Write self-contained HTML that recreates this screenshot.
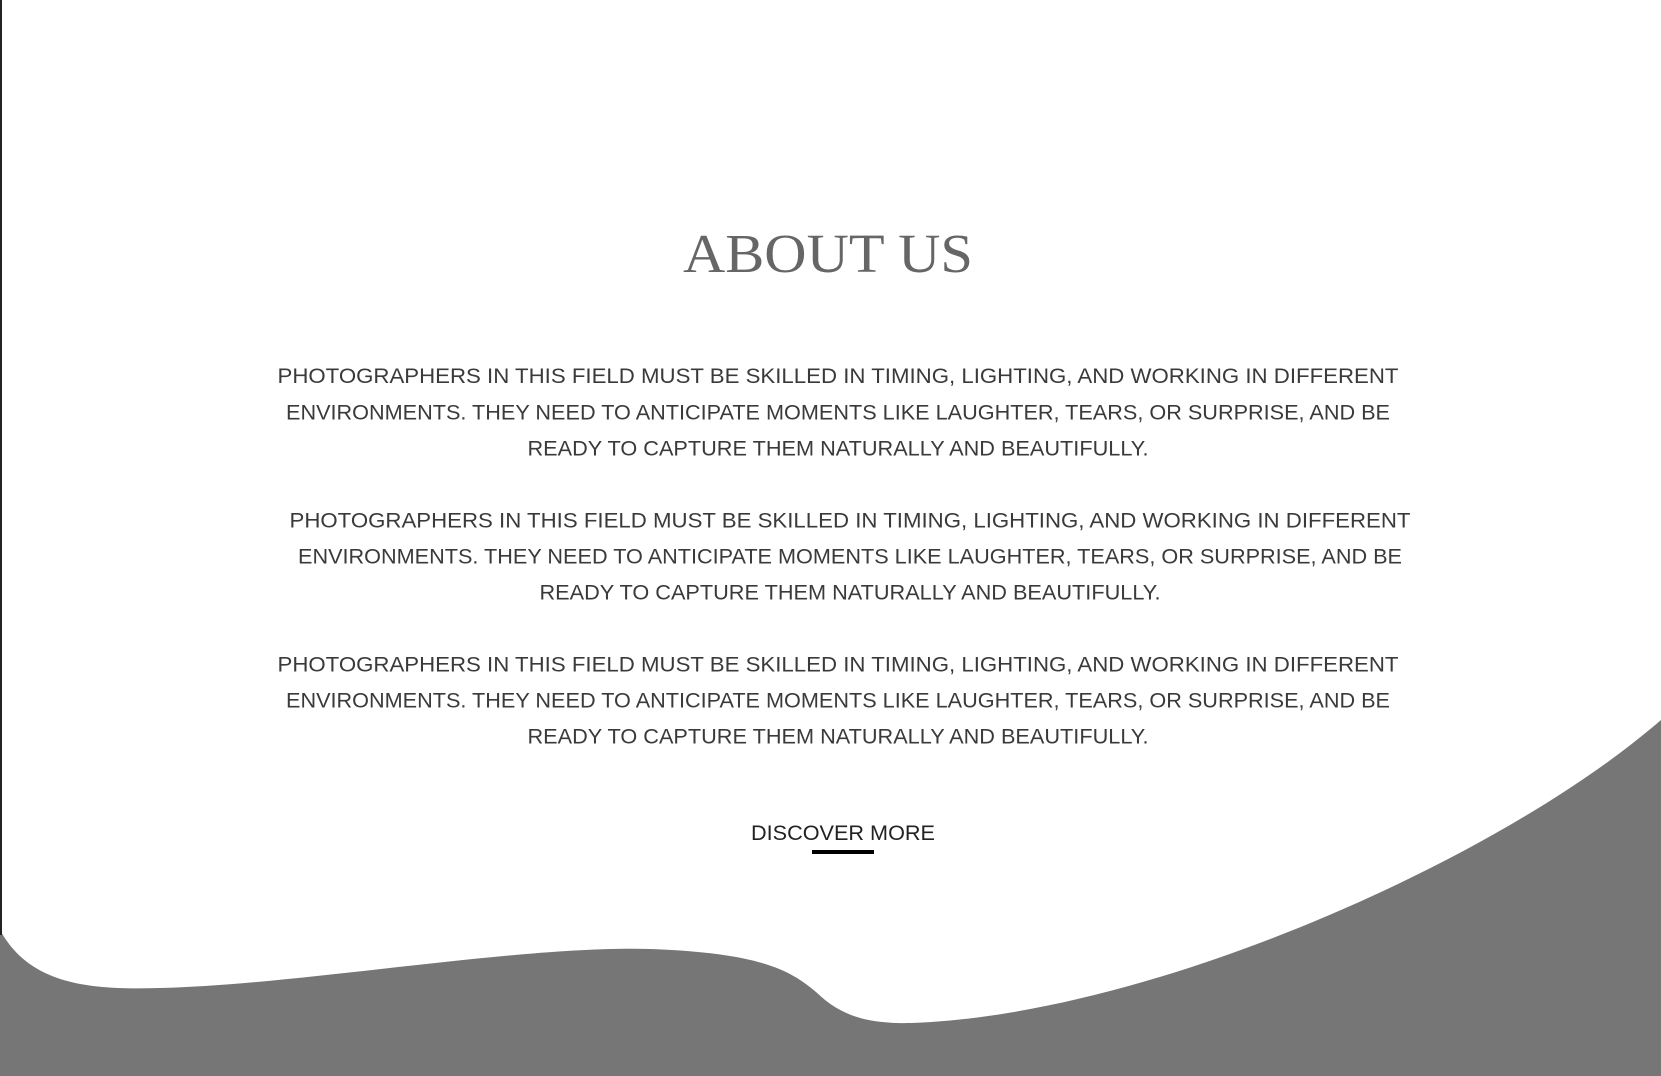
<!DOCTYPE html>
<html><head><meta charset="utf-8"><style>
html,body{margin:0;padding:0;background:#fff;width:1661px;height:1076px;overflow:hidden}
svg{display:block}
.b{font-family:"Liberation Sans",sans-serif;font-size:21px;fill:#3a3a3a}
</style></head><body>
<svg width="1661" height="1076" viewBox="0 0 1661 1076" xmlns="http://www.w3.org/2000/svg">
<rect x="0" y="0" width="1661" height="1076" fill="#fff"/>
<path d="M0,930 C30,985 90,990 159,988 C300,985 520,945 650,949 C760,953 790,970 816,992 C840,1015 865,1024 911,1023 C1150,1015 1500,860 1661,720 L1661,1076 L0,1076 Z" fill="#767676"/>
<line x1="1" y1="0" x2="1" y2="935" stroke="#222" stroke-width="2"/>
<text x="828" y="272" text-anchor="middle" font-family="Liberation Serif,serif" font-size="55" fill="#666" textLength="290" lengthAdjust="spacingAndGlyphs">ABOUT US</text>
<g class="b" text-anchor="middle">
<text x="838" y="383" textLength="1121" lengthAdjust="spacingAndGlyphs">PHOTOGRAPHERS IN THIS FIELD MUST BE SKILLED IN TIMING, LIGHTING, AND WORKING IN DIFFERENT</text>
<text x="838" y="419.5" textLength="1104" lengthAdjust="spacingAndGlyphs">ENVIRONMENTS. THEY NEED TO ANTICIPATE MOMENTS LIKE LAUGHTER, TEARS, OR SURPRISE, AND BE</text>
<text x="838" y="455.5" textLength="621" lengthAdjust="spacingAndGlyphs">READY TO CAPTURE THEM NATURALLY AND BEAUTIFULLY.</text>
<text x="850" y="527.5" textLength="1121" lengthAdjust="spacingAndGlyphs">PHOTOGRAPHERS IN THIS FIELD MUST BE SKILLED IN TIMING, LIGHTING, AND WORKING IN DIFFERENT</text>
<text x="850" y="563.5" textLength="1104" lengthAdjust="spacingAndGlyphs">ENVIRONMENTS. THEY NEED TO ANTICIPATE MOMENTS LIKE LAUGHTER, TEARS, OR SURPRISE, AND BE</text>
<text x="850" y="599.5" textLength="621" lengthAdjust="spacingAndGlyphs">READY TO CAPTURE THEM NATURALLY AND BEAUTIFULLY.</text>
<text x="838" y="671.5" textLength="1121" lengthAdjust="spacingAndGlyphs">PHOTOGRAPHERS IN THIS FIELD MUST BE SKILLED IN TIMING, LIGHTING, AND WORKING IN DIFFERENT</text>
<text x="838" y="707.5" textLength="1104" lengthAdjust="spacingAndGlyphs">ENVIRONMENTS. THEY NEED TO ANTICIPATE MOMENTS LIKE LAUGHTER, TEARS, OR SURPRISE, AND BE</text>
<text x="838" y="743.5" textLength="621" lengthAdjust="spacingAndGlyphs">READY TO CAPTURE THEM NATURALLY AND BEAUTIFULLY.</text>
<text x="843" y="840" textLength="184" lengthAdjust="spacingAndGlyphs" fill="#222">DISCOVER MORE</text>
</g>
<rect x="812" y="850" width="62" height="4" fill="#000"/>
</svg>
</body></html>
